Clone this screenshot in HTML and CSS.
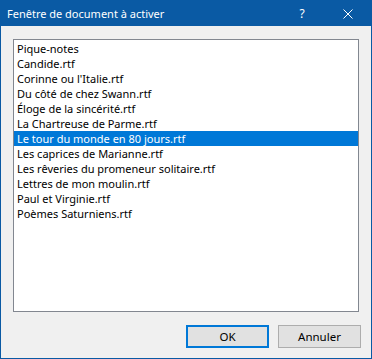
FILE: index.html
```html
<!DOCTYPE html>
<html lang="fr">

<head>
    <meta charset="utf-8">
    <title>Fenêtre de document à activer</title>
    <link rel="stylesheet" href="styles.css">
</head>

<body>

    <div class="fenetre">
        <header class="titre">
            <span class="titre-texte">Fenêtre de document à activer</span>
            <button class="legende aide">?</button>
            <button class="legende fermer">
                <svg width="10" height="10" viewBox="0 0 10 10">
                    <path d="M0.5 0.5 L9.5 9.5 M9.5 0.5 L0.5 9.5" stroke="white" stroke-width="1" fill="none" />
                </svg>
            </button>
        </header>

        <main class="contenu">
            <ul class="liste">
                <li>Pique-notes</li>
                <li>Candide.rtf</li>
                <li>Corinne ou l'Italie.rtf</li>
                <li>Du côté de chez Swann.rtf</li>
                <li>Éloge de la sincérité.rtf</li>
                <li>La Chartreuse de Parme.rtf</li>
                <li class="valgt">Le tour du monde en 80 jours.rtf</li>
                <li>Les caprices de Marianne.rtf</li>
                <li>Les rêveries du promeneur solitaire.rtf</li>
                <li>Lettres de mon moulin.rtf</li>
                <li>Paul et Virginie.rtf</li>
                <li>Poèmes Saturniens.rtf</li>
            </ul>

            <div class="knapper">
                <button class="knap standard">OK</button>
                <button class="knap">Annuler</button>
            </div>
        </main>
    </div>

</body></html>
```

FILE: styles.css
```css
body {
    margin: 0;
    font-family: "Segoe UI", "Noto Sans", sans-serif;
    font-size: 11px;
}

.fenetre {
    box-sizing: border-box;
    width: 372px;
    height: 359px;
    border: 1px solid #0a5aa4;
    background-color: #f0f0f0;
    display: flex;
    flex-direction: column;
}

.titre {
    height: 25px;
    background-color: #0a5aa4;
    color: white;
    display: flex;
    align-items: center;
}

.titre-texte {
    flex: 1;
    padding-left: 6px;
}

.legende {
    width: 46px;
    height: 25px;
    border: none;
    background: none;
    color: white;
    font-family: "Segoe UI", "Noto Sans", sans-serif;
    font-size: 12px;
    padding: 0;
    display: flex;
    align-items: center;
    justify-content: center;
}

.contenu {
    flex: 1;
    padding: 13px 10px 10px 12px;
    display: flex;
    flex-direction: column;
}

.liste {
    box-sizing: border-box;
    width: 346px;
    height: 273px;
    margin: 0;
    padding: 1px 0 0 0;
    list-style: none;
    background-color: white;
    border: 1px solid #828790;
}

.liste li {
    height: 15px;
    line-height: 15px;
    padding-left: 3px;
    white-space: nowrap;
}

.liste .valgt {
    background-color: #0078d7;
    color: white;
}

.knapper {
    margin-top: 13px;
    display: flex;
    justify-content: flex-end;
    gap: 9px;
}

.knap {
    box-sizing: border-box;
    width: 83px;
    height: 23px;
    border: 1px solid #adadad;
    background-color: #e1e1e1;
    font-family: "Segoe UI", "Noto Sans", sans-serif;
    font-size: 11.5px;
    color: black;
    padding: 0;
}

.standard {
    border: 2px solid #0078d7;
}
```
